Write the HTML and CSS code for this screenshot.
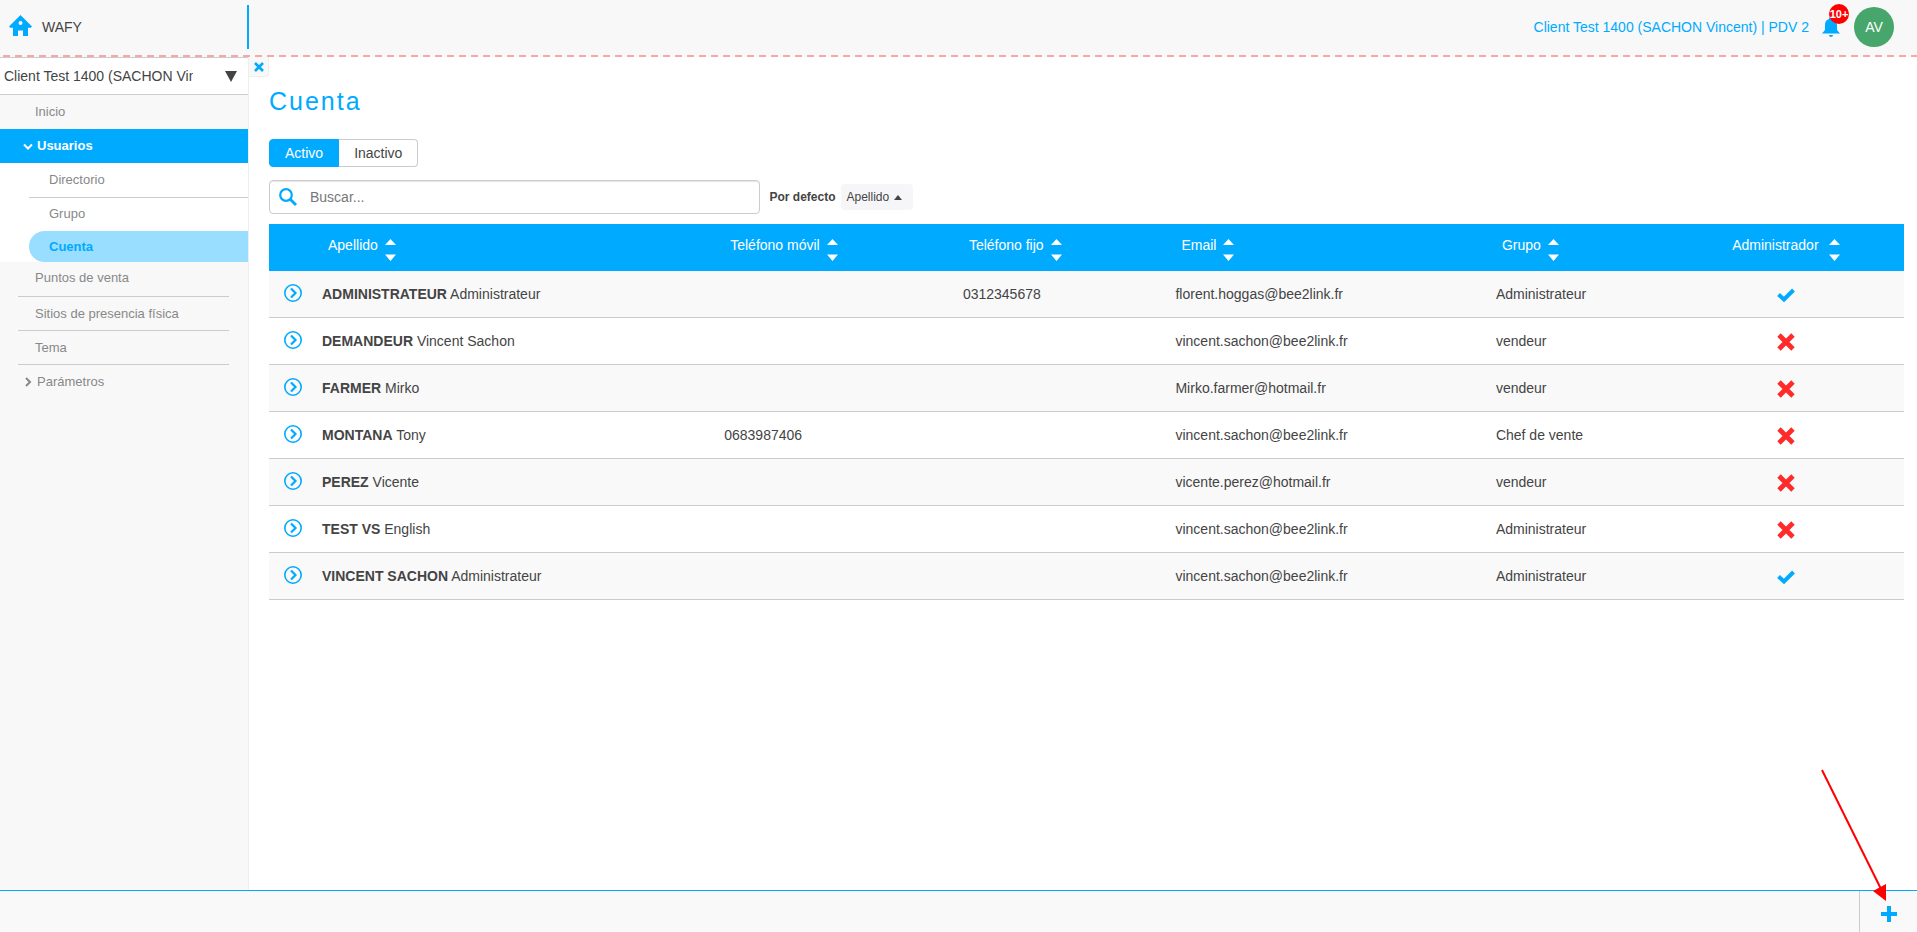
FILE: index.html
```html
<!DOCTYPE html>
<html lang="es">
<head>
    <meta charset="UTF-8">
    <meta name="viewport" content="width=device-width, initial-scale=1.0">
    <title>WAFY - Cuenta</title>
    <link rel="stylesheet" href="styles.css">
</head>
<body>

    <!-- Shared icons -->
    <svg class="sprite" aria-hidden="true">
        <symbol id="i-open" viewBox="0 0 18 18">
            <circle cx="9" cy="9" r="8.200" fill="none" stroke="currentColor" stroke-width="1.600"/>
            <path d="M7 4.500l4.500 4.500L7 13.500" fill="none" stroke="currentColor" stroke-width="2.200"/>
        </symbol>
        <symbol id="i-sort" viewBox="0 0 11 22">
            <path d="M0 6l5.500-6L11 6zM0 15.500h11L5.500 22z" fill="currentColor"/>
        </symbol>
        <symbol id="i-yes" viewBox="0 0 18 18">
            <path d="M1.500 8.500l5.500 5L16.500 4" fill="none" stroke="currentColor" stroke-width="4"/>
        </symbol>
        <symbol id="i-no" viewBox="0 0 18 18">
            <path d="M2 2l14 14M16 2L2 16" fill="none" stroke="currentColor" stroke-width="4.800"/>
        </symbol>
    </svg>

    <header class="topbar">
        <a class="brand" href="#">
            <svg class="home" viewBox="0 0 23 21" aria-hidden="true"><path fill-rule="evenodd" d="M11.500 0L23 11.500l-1.300 1.300H19V21h-5v-5.500H9V21H4v-8.200H1.300L0 11.500zM11.500 6a2 2 0 1 0 0 4 2 2 0 0 0 0-4z" fill="currentColor"/></svg>
            <span>WAFY</span>
        </a>
        <div class="session">
            <a class="client" href="#">Client Test 1400 (SACHON Vincent) | PDV 2</a>
            <button class="bell" type="button" aria-label="Notificaciones">
                <svg viewBox="0 0 18 20" aria-hidden="true"><path d="M9 0c1 0 2 1 2 2 3 1 4 3 4 6v5l3 3.500H0L3 13V8c0-3 1-5 4-6 0-1 1-2 2-2zM7 18h4c0 1-1 2-2 2s-2-1-2-2z" fill="currentColor"/></svg>
                <span class="badge">10+</span>
            </button>
            <button class="avatar" type="button">AV</button>
        </div>
    </header>

    <div class="layout">
        <aside class="sidebar">
            <select class="client-select" aria-label="Cliente">
                <option>Client Test 1400 (SACHON Vincent)</option>
            </select>
            <nav class="menu">
                <a class="item plain" href="#">Inicio</a>
                <a class="item open" href="#">
                    <svg class="chevron" viewBox="0 0 10 10" aria-hidden="true"><path d="M1 3.500l4 4 4-4" fill="none" stroke="currentColor" stroke-width="2"/></svg>Usuarios</a>
                <div class="submenu">
                    <a class="subitem" href="#">Directorio</a>
                    <a class="subitem last" href="#">Grupo</a>
                    <a class="subitem current" href="#">Cuenta</a>
                </div>
                <a class="item" href="#">Puntos de venta</a>
                <a class="item" href="#">Sitios de presencia física</a>
                <a class="item" href="#">Tema</a>
                <a class="item plain parent" href="#">
                    <svg class="chevron" viewBox="0 0 10 10" aria-hidden="true"><path d="M3 1l4 4-4 4" fill="none" stroke="currentColor" stroke-width="2"/></svg>Parámetros</a>
            </nav>
        </aside>

        <main class="content">
            <button class="close" type="button" aria-label="Cerrar el menú">
                <svg viewBox="0 0 10 10" aria-hidden="true"><path d="M1 1l8 8M9 1L1 9" stroke="currentColor" stroke-width="2.600"/></svg>
            </button>

            <h1>Cuenta</h1>

            <div class="toggle">
                <button class="on" type="button">Activo</button>
                <button type="button">Inactivo</button>
            </div>

            <div class="filters">
                <label class="search">
                    <svg viewBox="0 0 18 18" aria-hidden="true"><circle cx="7" cy="7" r="5.800" fill="none" stroke="currentColor" stroke-width="2.200"/><path d="M11 11l6 6" stroke="currentColor" stroke-width="2.800"/></svg>
                    <input type="text" placeholder="Buscar..." aria-label="Buscar">
                </label>
                <span class="sort-label">Por defecto</span>
                <button class="sort-by" type="button">Apellido
                    <svg viewBox="0 0 8 5" aria-hidden="true"><path d="M0 5l4-5 4 5z" fill="currentColor"/></svg>
                </button>
            </div>

            <table class="accounts">
                <colgroup>
                    <col class="c-open"><col class="c-name"><col class="c-mobile"><col class="c-phone"><col class="c-email"><col class="c-group"><col>
                </colgroup>
                <thead>
                    <tr>
                        <th></th>
                        <th><button type="button">Apellido<svg><use href="#i-sort"/></svg></button></th>
                        <th><button type="button">Teléfono móvil<svg><use href="#i-sort"/></svg></button></th>
                        <th><button type="button">Teléfono fijo<svg><use href="#i-sort"/></svg></button></th>
                        <th><button type="button">Email<svg><use href="#i-sort"/></svg></button></th>
                        <th><button type="button">Grupo<svg><use href="#i-sort"/></svg></button></th>
                        <th class="admin"><button type="button">Administrador<svg><use href="#i-sort"/></svg></button></th>
                    </tr>
                </thead>
                <tbody>
                    <tr>
                        <td class="go"><a href="#" aria-label="Abrir"><svg><use href="#i-open"/></svg></a></td>
                        <td><b>ADMINISTRATEUR</b> Administrateur</td>
                        <td></td>
                        <td>0312345678</td>
                        <td>florent.hoggas@bee2link.fr</td>
                        <td>Administrateur</td>
                        <td class="admin yes"><svg><use href="#i-yes"/></svg></td>
                    </tr>
                    <tr>
                        <td class="go"><a href="#" aria-label="Abrir"><svg><use href="#i-open"/></svg></a></td>
                        <td><b>DEMANDEUR</b> Vincent Sachon</td>
                        <td></td>
                        <td></td>
                        <td>vincent.sachon@bee2link.fr</td>
                        <td>vendeur</td>
                        <td class="admin no"><svg><use href="#i-no"/></svg></td>
                    </tr>
                    <tr>
                        <td class="go"><a href="#" aria-label="Abrir"><svg><use href="#i-open"/></svg></a></td>
                        <td><b>FARMER</b> Mirko</td>
                        <td></td>
                        <td></td>
                        <td>Mirko.farmer@hotmail.fr</td>
                        <td>vendeur</td>
                        <td class="admin no"><svg><use href="#i-no"/></svg></td>
                    </tr>
                    <tr>
                        <td class="go"><a href="#" aria-label="Abrir"><svg><use href="#i-open"/></svg></a></td>
                        <td><b>MONTANA</b> Tony</td>
                        <td>0683987406</td>
                        <td></td>
                        <td>vincent.sachon@bee2link.fr</td>
                        <td>Chef de vente</td>
                        <td class="admin no"><svg><use href="#i-no"/></svg></td>
                    </tr>
                    <tr>
                        <td class="go"><a href="#" aria-label="Abrir"><svg><use href="#i-open"/></svg></a></td>
                        <td><b>PEREZ</b> Vicente</td>
                        <td></td>
                        <td></td>
                        <td>vicente.perez@hotmail.fr</td>
                        <td>vendeur</td>
                        <td class="admin no"><svg><use href="#i-no"/></svg></td>
                    </tr>
                    <tr>
                        <td class="go"><a href="#" aria-label="Abrir"><svg><use href="#i-open"/></svg></a></td>
                        <td><b>TEST VS</b> English</td>
                        <td></td>
                        <td></td>
                        <td>vincent.sachon@bee2link.fr</td>
                        <td>Administrateur</td>
                        <td class="admin no"><svg><use href="#i-no"/></svg></td>
                    </tr>
                    <tr>
                        <td class="go"><a href="#" aria-label="Abrir"><svg><use href="#i-open"/></svg></a></td>
                        <td><b>VINCENT SACHON</b> Administrateur</td>
                        <td></td>
                        <td></td>
                        <td>vincent.sachon@bee2link.fr</td>
                        <td>Administrateur</td>
                        <td class="admin yes"><svg><use href="#i-yes"/></svg></td>
                    </tr>
                </tbody>
            </table>
        </main>
    </div>

    <footer class="actions">
        <button class="add" type="button" aria-label="Añadir">
            <svg viewBox="0 0 16 16" aria-hidden="true"><path d="M8 0v16M0 8h16" stroke="currentColor" stroke-width="4"/></svg>
        </button>
        <!-- Arrow pointing at the add button -->
        <svg class="pointer" viewBox="0 0 66 134" aria-hidden="true">
            <path d="M1 1l59 119" stroke="#f00" stroke-width="2"/>
            <path d="M52 122l13-7v17z" fill="#f00"/>
        </svg>
    </footer>

</body>
</html>
```

FILE: styles.css
```css
* {
    box-sizing: border-box;
}

body {
    font-family: "Liberation Sans", Arial, sans-serif;
    font-size: 14px;
    line-height: 20px;
    color: #444;
    background-color: #fff;
    margin: 0;
    min-height: 100vh;
    display: flex;
    flex-direction: column;
}

a {
    color: inherit;
    text-decoration: none;
}

button {
    font: inherit;
    color: inherit;
    background: none;
    border: none;
    padding: 0;
    cursor: pointer;
}

svg {
    display: block;
}

.sprite {
    position: absolute;
    width: 0;
    height: 0;
}

/* Top bar */
.topbar {
    display: flex;
    justify-content: space-between;
    height: 57px;
    padding-bottom: 3px;
    background: repeating-linear-gradient(90deg, transparent 0 3px, #f7a8a4 3px 10px, transparent 10px 12px) left bottom / 100% 2px no-repeat, #f8f8f8;
}

.brand {
    display: flex;
    align-items: center;
    gap: 10px;
    width: 249px;
    height: 44px;
    margin-top: 5px;
    padding-left: 9px;
    border-right: 2px solid #00aaff;
}

.home {
    width: 23px;
    height: 21px;
    margin-bottom: 3px;
    color: #00aaff;
}

.session {
    display: flex;
    align-items: center;
    padding-right: 23px;
    color: #00aaff;
}

.bell {
    position: relative;
    width: 18px;
    margin: 0 14px 0 13px;
}

.bell svg {
    width: 18px;
    height: 20px;
}

.badge {
    position: absolute;
    top: -13px;
    left: 7px;
    width: 20px;
    height: 20px;
    border-radius: 50%;
    background-color: #f00;
    color: #fff;
    font-size: 11px;
    font-weight: bold;
    text-align: center;
}

.avatar {
    width: 40px;
    height: 40px;
    border-radius: 50%;
    background-color: #47a66b;
    color: #fff;
}

.layout {
    flex: 1;
    display: flex;
}

/* Sidebar */
.sidebar {
    width: 249px;
    flex: none;
    background-color: #f8f8f8;
    border-right: 1px solid #eee;
}

.client-select {
    appearance: none;
    display: block;
    width: 100%;
    height: 38px;
    padding: 0 55px 0 4px;
    border: 1px solid #ccc;
    border-width: 1px 0;
    border-radius: 0;
    font: inherit;
    color: #444;
    background: #fff url("data:image/svg+xml,%3Csvg xmlns='http://www.w3.org/2000/svg' viewBox='0 0 12 11'%3E%3Cpath d='M0 0h12L6 11z' fill='%23444'/%3E%3C/svg%3E") right 11px center / 12px 11px no-repeat;
}

.menu {
    font-size: 13px;
    color: #888;
}

.item {
    display: flex;
    align-items: center;
    height: 34px;
    margin: 0 19px 0 18px;
    padding-left: 17px;
    border-bottom: 1px solid #ccc;
}

.item.plain {
    border-bottom: none;
}

.item.open {
    margin: 0;
    padding-left: 23px;
    border-bottom: none;
    background-color: #00aaff;
    color: #fff;
    font-weight: bold;
}

.item.parent {
    padding-left: 5px;
}

.submenu + .item {
    height: 35px;
    padding-bottom: 2px;
}

.chevron {
    width: 10px;
    height: 10px;
    margin-right: 4px;
}

.submenu {
    padding-left: 29px;
    background-color: #fff;
}

.subitem {
    display: flex;
    align-items: center;
    height: 35px;
    padding-left: 20px;
    border-bottom: 1px solid #ccc;
}

.subitem.last {
    height: 33px;
    padding-bottom: 2px;
    border-bottom: none;
}

.subitem.current {
    height: 31px;
    border-bottom: none;
    border-radius: 16px 0 0 16px;
    background-color: #99ddff;
    color: #00aaff;
    font-weight: bold;
}

/* Content */
.content {
    flex: 1;
    min-width: 0;
    padding: 0 13px 40px 20px;
}

.close {
    display: flex;
    align-items: center;
    justify-content: center;
    width: 20px;
    height: 20px;
    margin-left: -20px;
    border: 1px solid #eee;
    border-width: 0 1px 1px 0;
    border-radius: 0 0 4px 0;
    background-color: #f8f8f8;
    color: #00aaff;
}

.close svg {
    width: 10px;
    height: 10px;
}

h1 {
    margin: 9px 0 22px;
    font-size: 25px;
    line-height: 31px;
    font-weight: normal;
    letter-spacing: 2px;
    color: #00aaff;
}

.toggle {
    display: flex;
    margin-bottom: 13px;
}

.toggle button {
    height: 28px;
    padding: 0 15px;
    border: 1px solid #ccc;
    border-left: none;
    border-radius: 0 4px 4px 0;
    background-color: #fff;
}

.toggle .on {
    border: 1px solid #00aaff;
    border-radius: 4px 0 0 4px;
    background-color: #00aaff;
    color: #fff;
}

.filters {
    display: flex;
    align-items: center;
    margin-bottom: 10px;
    font-size: 12px;
}

.search {
    display: flex;
    align-items: center;
    gap: 13px;
    width: 30%;
    height: 34px;
    padding: 0 9px;
    border: 1px solid #ccc;
    border-radius: 4px;
    box-shadow: inset 0 1px 1px rgba(0, 0, 0, 0.1);
}

.search svg {
    width: 18px;
    height: 18px;
    color: #00aaff;
}

.search input {
    flex: 1;
    min-width: 0;
    padding: 0;
    border: none;
    outline: none;
    background: none;
    font: inherit;
    font-size: 14px;
}

.search input::placeholder {
    color: #777;
}

.sort-label {
    margin: 0 5px 0 10px;
    font-weight: bold;
}

.sort-by {
    display: flex;
    align-items: center;
    gap: 5px;
    height: 26px;
    padding: 0 11px 0 6px;
    border-radius: 4px;
    background-color: #f6f6f9;
}

.sort-by svg {
    width: 8px;
    height: 5px;
}

/* Accounts table */
.accounts {
    width: 100%;
    table-layout: fixed;
    border-collapse: separate;
    border-spacing: 0;
}

.c-open { width: 45px; }
.c-name { width: 24.6%; }
.c-mobile { width: 14.6%; }
.c-phone { width: 13%; }
.c-email { width: 19.6%; }
.c-group { width: 11%; }

th {
    height: 47px;
    padding: 0 14px;
    background-color: #00aaff;
    color: #fff;
    font-weight: normal;
    text-align: left;
}

th button {
    display: inline-flex;
    gap: 7px;
    vertical-align: middle;
}

th svg {
    width: 11px;
    height: 22px;
    margin-top: 4px;
}

td {
    height: 47px;
    padding: 0 8px;
    border-bottom: 1px solid #ccc;
}

tbody tr:nth-child(odd) {
    background-color: #f9f9f9;
}

.go {
    padding: 0 15px 2px;
    color: #00aaff;
}

.go svg,
.admin svg {
    width: 18px;
    height: 18px;
}

.admin {
    text-align: center;
}

td.admin {
    padding-top: 2px;
}

td.admin svg {
    margin: 0 auto;
}

th.admin svg {
    width: 11px;
    height: 22px;
}

th.admin button {
    gap: 10px;
}

.yes {
    color: #00aaff;
}

.no {
    color: #ff2a2a;
}

/* Bottom bar */
.actions {
    position: relative;
    display: flex;
    justify-content: flex-end;
    height: 42px;
    border-top: 1px solid #00aaff;
    background-color: #f9f9f9;
}

.add {
    display: flex;
    align-items: center;
    justify-content: center;
    width: 58px;
    padding-top: 5px;
    border-left: 1px solid #ccc;
    color: #00aaff;
}

.add svg {
    width: 16px;
    height: 16px;
}

.pointer {
    position: absolute;
    right: 30px;
    bottom: 29px;
    width: 66px;
    height: 134px;
    pointer-events: none;
}
```
